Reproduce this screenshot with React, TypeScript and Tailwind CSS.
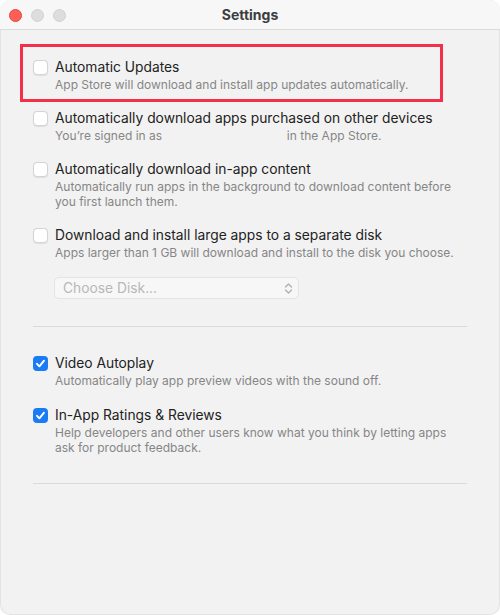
import React from "react";

type Item = {
  title: string;
  desc: React.ReactNode;
  checked?: boolean;
};

function Checkbox({ checked }: { checked?: boolean }) {
  if (checked) {
    return (
      <div className="mt-[1.5px] flex h-[15px] w-[15px] shrink-0 items-center justify-center rounded-[4px] bg-[#1a7bf4]">
        <svg width="11" height="11" viewBox="0 0 11 11" fill="none">
          <path d="M2 5.8 L4.4 8.3 L9 2.7" stroke="white" strokeWidth="1.9" strokeLinecap="round" strokeLinejoin="round" />
        </svg>
      </div>
    );
  }
  return (
    <div className="mt-[1.5px] h-[15px] w-[15px] shrink-0 rounded-[4px] border border-[#d4d4d4] bg-white shadow-[0_0.5px_1px_rgba(0,0,0,0.08)]" />
  );
}

function Row({ item }: { item: Item }) {
  return (
    <div className="flex gap-[7px]">
      <Checkbox checked={item.checked} />
      <div className="flex flex-col">
        <div className="text-[13.8px] leading-[18px] text-[#222222]">{item.title}</div>
        <div className="mt-[1px] text-[12px] leading-[15px] text-[#868686]">{item.desc}</div>
      </div>
    </div>
  );
}

export default function App() {
  return (
    <div className="h-[615px] w-[500px] bg-white" style={{ fontFamily: "Inter, 'Liberation Sans', sans-serif" }}>
      <div className="flex h-full w-full flex-col overflow-hidden rounded-[10px] bg-[#f2f2f2] shadow-[inset_0_0_0_1px_rgba(0,0,0,0.06)]">
        {/* title bar */}
        <div className="relative flex h-[30px] shrink-0 items-center justify-center border-b border-[#dcdcdc] bg-[#f7f7f7]">
          <div className="absolute left-[9px] top-[8.5px] flex gap-[9px]">
            <div className="h-[13px] w-[13px] rounded-full border border-[#e2463f] bg-[#fe5f57]" />
            <div className="h-[13px] w-[13px] rounded-full border border-[#d1d1d1] bg-[#dddddd]" />
            <div className="h-[13px] w-[13px] rounded-full border border-[#d1d1d1] bg-[#dddddd]" />
          </div>
          <span className="text-[14px] font-bold text-[#3d3d3d]">Settings</span>
        </div>

        {/* content */}
        <div className="flex flex-col px-[33px] pt-[14px]">
          <div className="-ml-[13px] w-[423px] border-[3px] border-[#f2304a] px-[10px] pt-[11px] pb-[7px]">
            <Row
              item={{
                title: "Automatic Updates",
                desc: "App Store will download and install app updates automatically.",
              }}
            />
          </div>

          <div className="mt-[7px] flex flex-col gap-[17px]">
            <Row
              item={{
                title: "Automatically download apps purchased on other devices",
                desc: (
                  <>
                    You’re signed in as <span className="inline-block w-[118px]" /> in the App Store.
                  </>
                ),
              }}
            />
            <Row
              item={{
                title: "Automatically download in-app content",
                desc: "Automatically run apps in the background to download content before you first launch them.",
              }}
            />
            <div className="flex flex-col">
              <Row
                item={{
                  title: "Download and install large apps to a separate disk",
                  desc: "Apps larger than 1 GB will download and install to the disk you choose.",
                }}
              />
              <div className="ml-[21px] mt-[17px] flex h-[22px] w-[245px] items-center justify-between rounded-[5px] border border-[#e4e4e4] bg-[#f7f7f7] pl-[8px] pr-[5px]">
                <span className="text-[13.8px] text-[#b8b8b8]">Choose Disk...</span>
                <svg width="9" height="13" viewBox="0 0 9 13" fill="none">
                  <path d="M1.5 5 L4.5 2 L7.5 5" stroke="#b0b0b0" strokeWidth="1.3" strokeLinecap="round" strokeLinejoin="round" />
                  <path d="M1.5 8 L4.5 11 L7.5 8" stroke="#b0b0b0" strokeWidth="1.3" strokeLinecap="round" strokeLinejoin="round" />
                </svg>
              </div>
            </div>
          </div>

          <div className="mt-[27px] h-px bg-[#dadada]" />

          <div className="mt-[27px] flex flex-col gap-[18px]">
            <Row
              item={{
                title: "Video Autoplay",
                desc: "Automatically play app preview videos with the sound off.",
                checked: true,
              }}
            />
            <Row
              item={{
                title: "In-App Ratings & Reviews",
                desc: "Help developers and other users know what you think by letting apps ask for product feedback.",
                checked: true,
              }}
            />
          </div>

          <div className="mt-[28px] h-px bg-[#dadada]" />
        </div>
      </div>
    </div>
  );
}
